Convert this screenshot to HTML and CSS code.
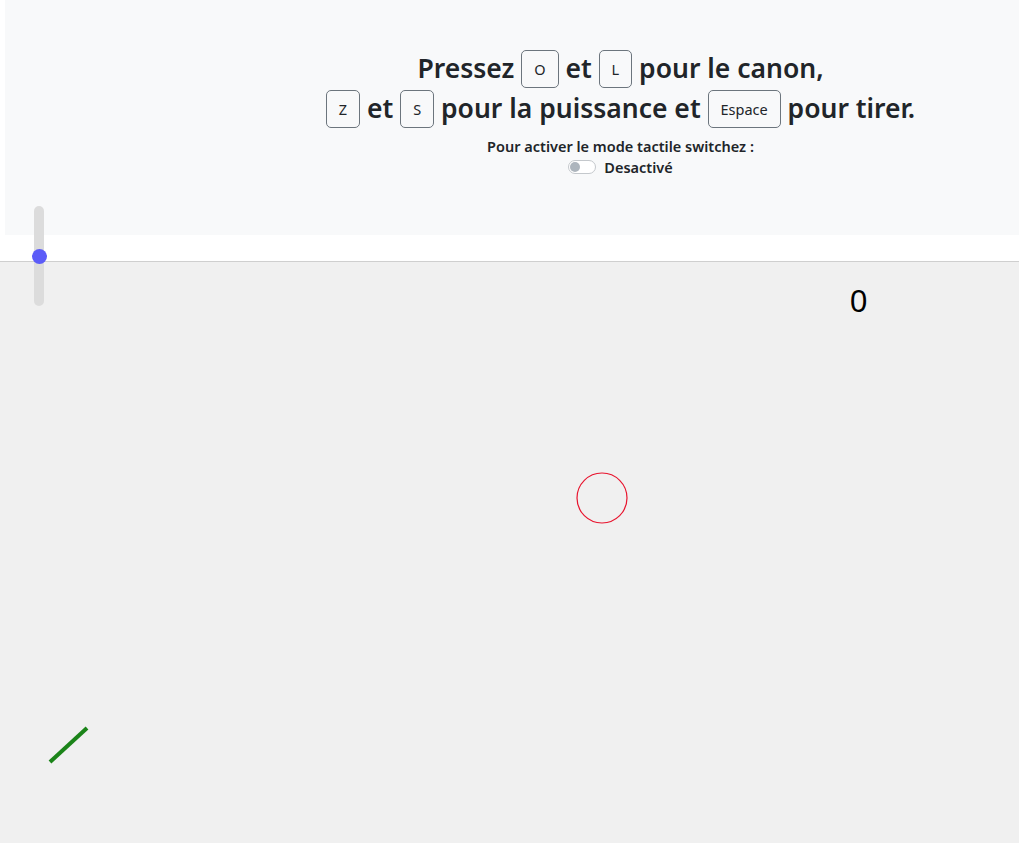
FILE: index.html
```html
<!DOCTYPE html>
<html lang="fr">
<head>
<meta charset="utf-8">
<title>Canon</title>
<link rel="stylesheet" href="styles.css">
</head>
<body>
<div class="page">
  <header class="panel">
    <div class="intro">
      <p class="instructions">
        Pressez <span class="key">O</span> et <span class="key">L</span> pour le canon,<br>
        <span class="key">Z</span> et <span class="key">S</span> pour la puissance et <span class="key">Espace</span> pour tirer.
      </p>
      <p class="touch">Pour activer le mode tactile switchez :</p>
      <label class="switch-row"><span class="switch"><span class="knob"></span></span>Desactivé</label>
    </div>
  </header>
  <div class="spacer"></div>
  <main class="game">
    <svg class="field" viewBox="0 0 1019 581" preserveAspectRatio="xMinYMin meet" xmlns="http://www.w3.org/2000/svg">
      <text x="850" y="50" class="score">0</text>
      <circle cx="602" cy="236" r="25" fill="none" stroke="#e8142e" stroke-width="1.2"/>
      <line x1="50" y1="500" x2="87" y2="466" stroke="#1b8419" stroke-width="4"/>
    </svg>
  </main>
  <div class="power" aria-label="puissance">
    <div class="track"></div>
    <div class="thumb"></div>
  </div>
</div>
</body>
</html>
```
FILE: styles.css
```css
* { box-sizing: border-box; }
html, body { margin: 0; height: 100%; }
body {
  font-family: "Segoe UI", "Noto Sans", "Open Sans", sans-serif;
  color: #212529;
  background: #fff;
}
.page {
  position: relative;
  display: flex;
  flex-direction: column;
  height: 843px;
}
.panel {
  margin-left: 5px;
  height: 235px;
  background: #f8f9fa;
  padding: 48px 0 0 217px;
}
.intro { text-align: center; }
.instructions {
  margin: 0;
  font-size: 26.5px;
  font-weight: 600;
  line-height: 40px;
}
.key {
  display: inline-flex;
  align-items: center;
  justify-content: center;
  height: 38px;
  margin: -4px 0;
  padding: 0 12px;
  border: 1px solid #6c757d;
  border-radius: 5px;
  font-size: 14.5px;
  font-weight: 400;
  vertical-align: middle;
  line-height: 1;
  position: relative;
  top: -2px;
}
.touch {
  margin: 9px 0 0;
  font-size: 14.5px;
  font-weight: 600;
  line-height: 18px;
}
.switch-row {
  display: inline-flex;
  align-items: center;
  gap: 8px;
  font-size: 14.5px;
  font-weight: 600;
  line-height: 18px;
}
.switch {
  width: 28px;
  height: 14px;
  border: 1px solid #c4c8cc;
  border-radius: 7px;
  background: #fff;
  display: flex;
  align-items: center;
  padding-left: 1px;
}
.knob {
  width: 10px;
  height: 10px;
  border-radius: 50%;
  background: #adb5bd;
}
.spacer { height: 26px; }
.game {
  flex: 1;
  background: #f0f0f0;
  border-top: 1px solid #cfcfcf;
}
.field { display: block; width: 100%; height: 100%; }
.score {
  font-family: "Liberation Sans", Arial, sans-serif;
  font-size: 31px;
  fill: #000;
}
.power {
  position: absolute;
  left: 31px;
  top: 206px;
  width: 16px;
  height: 100px;
}
.track {
  position: absolute;
  left: 3px;
  top: 0;
  width: 10px;
  height: 100px;
  border-radius: 5px;
  background: #dcdcdc;
}
.thumb {
  position: absolute;
  left: 0.5px;
  top: 42.5px;
  width: 15px;
  height: 15px;
  border-radius: 50%;
  background: #5c5cf8;
}
```
